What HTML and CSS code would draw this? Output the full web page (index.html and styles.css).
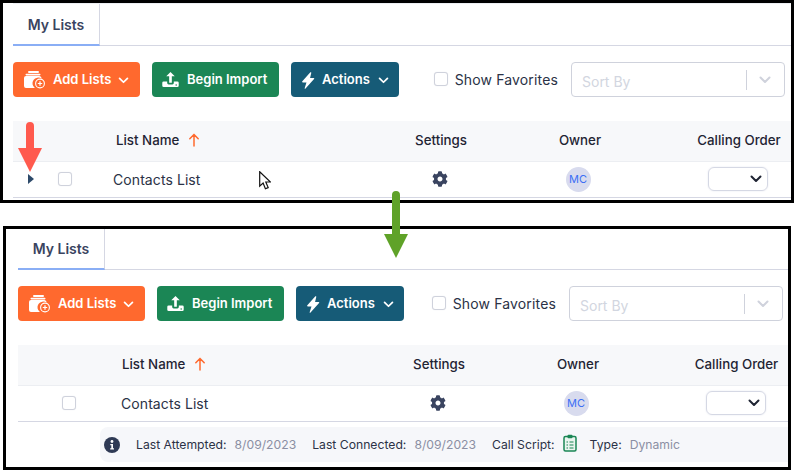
FILE: index.html
```html
<!DOCTYPE html>
<html lang="en">
<head>
<meta charset="utf-8">
<title>My Lists</title>
<link rel="stylesheet" href="styles.css">
</head>
<body>
<svg class="defs" aria-hidden="true">
  <symbol id="i-folder" viewBox="0 0 21 18">
    <rect x="4" y="0" width="11" height="2" rx="1" fill="#fff"/>
    <rect x="1.500" y="2.800" width="15" height="1.600" rx=".8" fill="#fff"/>
    <path d="M2 5h13a2.500 2.500 0 0 1 2.500 2.500v.1a5.500 5.500 0 0 0-6.600 9.400H2a2 2 0 0 1-2-2V7a2 2 0 0 1 2-2z" fill="#fff"/>
    <circle cx="16" cy="12.500" r="4.400" fill="none" stroke="#fff" stroke-width="1.100"/>
    <path d="M16 10.300v4.400M13.800 12.500h4.400" stroke="#fff" stroke-width="1.200"/>
  </symbol>
  <symbol id="i-upload" viewBox="0 0 18 17">
    <path d="M9 0.500 13.500 5 H10.400 V12 H7.600 V5 H4.500z" fill="#fff"/>
    <path d="M5.500 10.500H1.800A1.500 1.500 0 0 0 .3 12v3a1.500 1.500 0 0 0 1.500 1.500h14.400a1.500 1.500 0 0 0 1.500-1.500v-3a1.500 1.500 0 0 0-1.500-1.500h-3.700v1.800a1.500 1.500 0 0 1-1.500 1.500H7a1.500 1.500 0 0 1-1.500-1.500z" fill="#fff"/>
    <circle cx="15" cy="14.400" r=".8" fill="#1b8655"/>
  </symbol>
  <symbol id="i-bolt" viewBox="0 0 14 18">
    <path d="M9.500.3 1 9.800a.7.7 0 0 0 .5 1.200h3.900L3.500 17a.5.5 0 0 0 .9.500l9-10a.7.700 0 0 0-.5-1.200H9.200l1.300-5.600a.6.600 0 0 0-1-.4z" fill="#fff"/>
  </symbol>
  <symbol id="i-chev" viewBox="0 0 12 8">
    <path d="M1.500 1.500 6 6l4.500-4.500" fill="none" stroke="currentColor" stroke-width="2" stroke-linecap="round" stroke-linejoin="round"/>
  </symbol>
  <symbol id="i-gear" viewBox="0 0 512 512">
    <path fill="currentColor" d="M487.4 315.7l-42.6-24.6c4.3-23.2 4.3-47 0-70.2l42.6-24.6c4.9-2.8 7.1-8.6 5.5-14-11.1-35.6-30-67.8-54.700-94.600-3.800-4.100-10-5.100-14.800-2.300L380.800 110c-17.900-15.400-38.500-27.300-60.800-35.100V25.800c0-5.600-3.900-10.500-9.400-11.700-36.700-8.200-74.300-7.800-109.200 0-5.500 1.200-9.400 6.100-9.400 11.700V75c-22.200 7.900-42.800 19.800-60.800 35.100L88.700 85.500c-4.900-2.800-11-1.900-14.800 2.300-24.700 26.700-43.600 58.900-54.700 94.600-1.700 5.400.6 11.200 5.500 14L67.300 221c-4.300 23.200-4.300 47 0 70.200l-42.600 24.600c-4.900 2.800-7.100 8.600-5.500 14 11.100 35.600 30 67.800 54.700 94.600 3.800 4.100 10 5.100 14.800 2.300l42.600-24.600c17.900 15.400 38.500 27.300 60.800 35.100v49.200c0 5.600 3.900 10.500 9.400 11.700 36.700 8.200 74.300 7.800 109.200 0 5.500-1.200 9.400-6.100 9.400-11.700v-49.200c22.200-7.900 42.800-19.800 60.800-35.100l42.600 24.600c4.900 2.800 11 1.900 14.800-2.300 24.700-26.700 43.600-58.900 54.700-94.600 1.500-5.500-.7-11.300-5.600-14.100zM256 336c-44.100 0-80-35.900-80-80s35.900-80 80-80 80 35.900 80 80-35.900 80-80 80z"/>
  </symbol>
  <symbol id="i-sort" viewBox="0 0 12 14">
    <path d="M6 13V1.500M1.800 5.800 6 1.500l4.200 4.300" fill="none" stroke="currentColor" stroke-width="1.500" stroke-linecap="round" stroke-linejoin="round"/>
  </symbol>
</svg>

<main class="page">
  <section class="panel panel-before">
    <div class="tabs"><div class="tab">My Lists</div></div>
    <div class="toolbar">
      <button class="btn btn-orange"><svg class="ico-folder"><use href="#i-folder"/></svg>Add Lists<svg class="ico-chev"><use href="#i-chev"/></svg></button>
      <button class="btn btn-green"><svg class="ico-upload"><use href="#i-upload"/></svg>Begin Import</button>
      <button class="btn btn-blue"><svg class="ico-bolt"><use href="#i-bolt"/></svg>Actions<svg class="ico-chev"><use href="#i-chev"/></svg></button>
      <label class="favorites"><span class="check"></span>Show Favorites</label>
      <div class="sort"><span class="sort-text">Sort By</span><span class="sort-sep"></span><svg class="sort-chev"><use href="#i-chev"/></svg></div>
    </div>
    <div class="table">
      <div class="head">
        <span></span><span></span>
        <span class="col-name">List Name<svg class="ico-sort"><use href="#i-sort"/></svg></span>
        <span class="col-center">Settings</span>
        <span class="col-center">Owner</span>
        <span class="col-order">Calling Order</span>
      </div>
      <div class="row">
        <span class="expander"></span>
        <span class="check check-row"></span>
        <span class="row-name">Contacts List</span>
        <span class="col-center"><svg class="ico-gear"><use href="#i-gear"/></svg></span>
        <span class="col-center"><span class="avatar">MC</span></span>
        <span class="col-order"><span class="order-select"><svg class="order-chev"><use href="#i-chev"/></svg></span></span>
      </div>
    </div>
  </section>

  <section class="panel panel-after">
    <div class="tabs"><div class="tab">My Lists</div></div>
    <div class="toolbar">
      <button class="btn btn-orange"><svg class="ico-folder"><use href="#i-folder"/></svg>Add Lists<svg class="ico-chev"><use href="#i-chev"/></svg></button>
      <button class="btn btn-green"><svg class="ico-upload"><use href="#i-upload"/></svg>Begin Import</button>
      <button class="btn btn-blue"><svg class="ico-bolt"><use href="#i-bolt"/></svg>Actions<svg class="ico-chev"><use href="#i-chev"/></svg></button>
      <label class="favorites"><span class="check"></span>Show Favorites</label>
      <div class="sort"><span class="sort-text">Sort By</span><span class="sort-sep"></span><svg class="sort-chev"><use href="#i-chev"/></svg></div>
    </div>
    <div class="table">
      <div class="head">
        <span></span><span></span>
        <span class="col-name">List Name<svg class="ico-sort"><use href="#i-sort"/></svg></span>
        <span class="col-center">Settings</span>
        <span class="col-center">Owner</span>
        <span class="col-order">Calling Order</span>
      </div>
      <div class="row">
        <span></span>
        <span class="check check-row"></span>
        <span class="row-name">Contacts List</span>
        <span class="col-center"><svg class="ico-gear"><use href="#i-gear"/></svg></span>
        <span class="col-center"><span class="avatar">MC</span></span>
        <span class="col-order"><span class="order-select"><svg class="order-chev"><use href="#i-chev"/></svg></span></span>
      </div>
      <div class="details">
        <svg class="ico-info" viewBox="0 0 16 16"><circle cx="8" cy="8" r="8" fill="#2f3a55"/><circle cx="8" cy="4.500" r="1.400" fill="#fff"/><path d="M6.300 7h2.700v4.200h1v1.300H6.200v-1.300h1.100V8.300h-1z" fill="#fff"/></svg>
        <span class="detail"><span class="label">Last Attempted:</span><span class="value">8/09/2023</span></span>
        <span class="detail"><span class="label">Last Connected:</span><span class="value">8/09/2023</span></span>
        <span class="detail detail-script"><span class="label">Call Script:</span><svg class="ico-script" viewBox="0 0 14 18"><rect x="1" y="2.500" width="12" height="14.500" rx="1.500" fill="#eaf5ef" stroke="#1b8655" stroke-width="1.500"/><rect x="4.500" y=".8" width="5" height="3.500" rx="1" fill="#1b8655"/><path d="M3.500 8h1.500M6.500 8h4M3.500 11h1.500M6.500 11h4M3.500 14h1.500M6.500 14h4" stroke="#1b8655" stroke-width="1.100"/></svg></span>
        <span class="detail"><span class="label">Type:</span><span class="value">Dynamic</span></span>
      </div>
    </div>
  </section>

  <svg class="arrow arrow-red" viewBox="0 0 24 50"><path d="M8 4a4 4 0 0 1 8 0v22h8L12 50 0 26h8z" fill="#ff5a4e"/></svg>
  <svg class="arrow arrow-green" viewBox="0 0 24 67"><path d="M8 4a4 4 0 0 1 8 0v39h8L12 67 0 43h8z" fill="#5fa228"/></svg>
  <svg class="cursor" viewBox="0 0 12 19"><path d="M.7.700v14.500l3.400-3.200 2.300 5.800 2.800-1.200-2.400-5.600h4.700z" fill="#fff" stroke="#111" stroke-width="1.200" stroke-linejoin="miter"/></svg>
</main>
</body>
</html>
```
FILE: styles.css
```css
* { box-sizing: border-box; }
html, body { margin: 0; padding: 0; background: #fff; }
body { width: 794px; height: 470px; overflow: hidden; font-family: Inter, "Liberation Sans", sans-serif; color: #2b3246; }
.defs { position: absolute; width: 0; height: 0; }

.page { position: relative; display: flex; flex-direction: column; gap: 23px; width: 794px; height: 470px; }

.panel { border: 3px solid #000; background: #fff; }
.panel-before {
  width: 794px; height: 203px; padding: 0 0 0 10px;
  --tabs-h: 43px; --sort-right: 6px;
  --cols: 32px 68px 268px 120px 158px 132px;
  --head-indent: 3px; --check-indent: 13px;
}
.panel-after {
  width: 788px; height: 244px; margin-left: 3px; padding: 0 0 0 12px;
  --tabs-h: 41px; --sort-right: 5px;
  --cols: 32px 71px 258px 120px 158px 131px;
  --head-indent: 1px; --check-indent: 12px;
}
.panel-before .tabs { border-top: 1px solid #eceef2; }

.tabs { height: var(--tabs-h); border-bottom: 1px solid #d5d7e3; }
.tab {
  display: flex; align-items: center; justify-content: center;
  width: 87px; height: calc(100% + 1px);
  border-right: 1px solid #d5d7e3; border-bottom: 2px solid #8aaef5;
  font-size: 14px; font-weight: 600; color: #3a4460;
}

.toolbar { display: flex; align-items: center; gap: 12px; height: 35px; margin-top: 16px; padding-right: var(--sort-right); }

.btn {
  display: flex; align-items: center; height: 35px; padding: 0 0 2px; border: 0; border-radius: 4px;
  font-family: inherit; font-size: 13px; font-weight: 600; color: #fff; white-space: nowrap;
}
.btn-orange { width: 127px; background: #ff692e; padding-left: 11px; }
.btn-green { width: 127px; background: #1b8655; padding-left: 10px; }
.btn-blue { width: 108px; background: #165b77; padding-left: 10px; }
.ico-folder { width: 21px; height: 18px; margin-right: 8px; margin-top: 2px; }
.ico-upload { width: 17px; height: 17px; margin-right: 8px; margin-top: 1px; }
.ico-bolt { width: 14px; height: 17px; margin-right: 7px; margin-top: 3px; }
.ico-chev { width: 11px; height: 7px; margin-left: 8px; margin-top: 4px; color: #fff; }
.btn-orange .ico-chev { margin-left: 7px; }

.favorites { display: flex; align-items: center; margin-left: auto; font-size: 14px; letter-spacing: .15px; color: #2b3246; }
.check { display: block; width: 14px; height: 14px; border: 1px solid #cfd2dc; border-radius: 3px; background: #fff; box-shadow: 0 0 1px #dfe1e8; }
.favorites .check { margin-right: 7px; margin-top: -1px; }

.sort { display: flex; align-items: center; width: 214px; height: 35px; padding-left: 10px; border: 1px solid #cfd2dc; border-radius: 4px; margin-left: 1px; }
.sort-text { flex: 1; font-size: 14px; color: #d2d6e0; padding-top: 3px; }
.sort-sep { width: 1px; height: 20px; background: #cfd2dc; }
.sort-chev { width: 12px; height: 8px; margin: 0 13px 0 12px; color: #cfd2dc; }

.table { margin-top: 24px; }
.head, .row { display: grid; grid-template-columns: var(--cols); align-items: center; }
.head { height: 41px; padding-bottom: 2px; background: #f7f8fa; border-bottom: 1px solid #eceef2; font-size: 13.300px; font-weight: 500; color: #1f2433; }
.row { height: 36px; border-bottom: 1px solid #d5d7e3; font-size: 14px; }

.col-name { display: flex; align-items: center; padding-left: var(--head-indent); }
.ico-sort { width: 12px; height: 14px; margin-left: 9px; color: #ff692e; }
.col-center { display: flex; justify-content: center; }
.col-order { display: flex; justify-content: center; padding-left: 28px; white-space: nowrap; }

.expander { width: 0; height: 0; margin-left: 15px; margin-top: -2px; border-style: solid; border-width: 5px 0 5px 6.500px; border-color: transparent transparent transparent #2d4a6a; }
.check-row { margin-left: var(--check-indent); margin-top: -2px; }
.row-name { color: #2b3246; letter-spacing: .08px; margin-top: -1px; }

.ico-gear { width: 16px; height: 16px; color: #3a4460; margin-right: 2px; margin-top: -2px; }
.avatar { display: flex; align-items: center; justify-content: center; width: 25px; height: 25px; border-radius: 50%; background: #d8dbee; color: #3b6ff5; font-size: 11px; font-weight: 400; margin-right: 4px; margin-top: -1px; }
.order-select { display: flex; align-items: center; justify-content: flex-end; width: 60px; height: 24px; margin-left: -2px; margin-top: -2px; padding-right: 5px; border: 1px solid #d5d8e4; border-radius: 6px; box-shadow: 0 0 2px #e4e6ee; }
.order-chev { width: 12px; height: 8px; color: #1f2433; }

.details { display: flex; align-items: center; height: 35px; margin: 5px 0 0 82px; padding-left: 4px; background: #f6f7fa; border-radius: 8px 0 0 8px; font-size: 12.200px; }
.ico-info { width: 16px; height: 16px; margin-right: 16px; flex: none; }
.detail { display: flex; align-items: center; gap: 8px; margin-right: 16px; white-space: nowrap; }
.detail-script { margin-right: 13px; }
.label { color: #2b3246; }
.value { color: #8b8fa3; }
.ico-script { width: 14px; height: 18px; margin-top: -3px; }

.arrow, .cursor { position: absolute; }
.arrow-red { left: 18px; top: 122px; width: 24px; height: 50px; }
.arrow-green { left: 384px; top: 191px; width: 24px; height: 67px; }
.cursor { left: 259px; top: 171px; width: 12px; height: 19px; }
```
